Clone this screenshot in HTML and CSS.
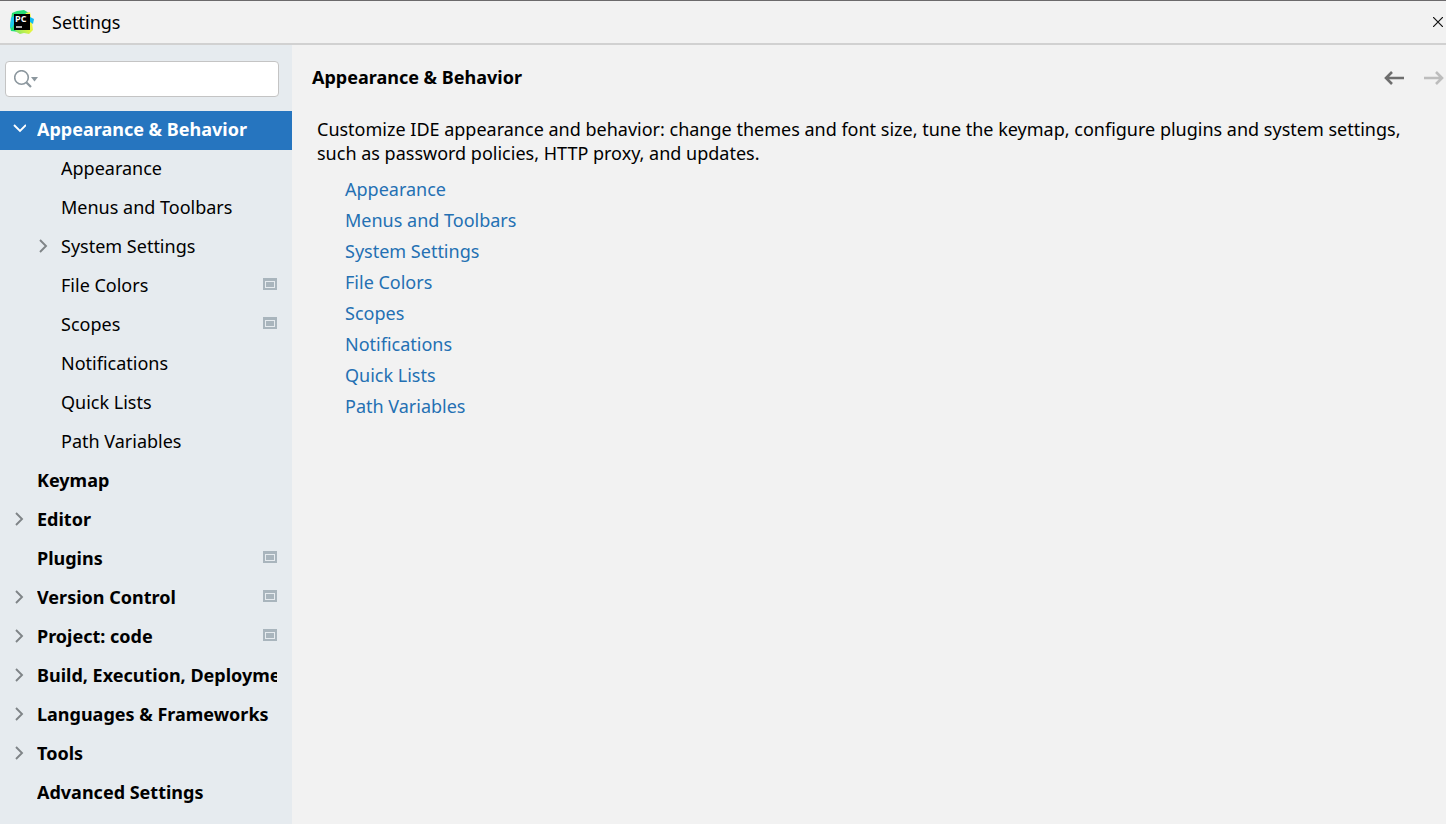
FILE: index.html
```html
<!DOCTYPE html>
<html lang="en">
<head>
<meta charset="utf-8">
<meta name="viewport" content="width=device-width, initial-scale=1">
<title>Settings</title>
<link rel="stylesheet" href="styles.css">
</head>
<body>
<svg class="symbols" aria-hidden="true">
  <symbol id="chevron-right" viewBox="0 0 14 14"><path d="M4 1 10 7 4 13" fill="none" stroke="currentColor" stroke-width="1.9"/></symbol>
  <symbol id="chevron-down" viewBox="0 0 14 14"><path d="M2 3 8 9 14 3" fill="none" stroke="currentColor" stroke-width="1.9"/></symbol>
  <symbol id="project" viewBox="0 0 14 12"><path d="M0 0h14v12H0zM2 3v7h10V3z" fill="#a9b5bd" fill-rule="evenodd"/><path d="M3 4h8v5H3z" fill="#a9b5bd"/></symbol>
</svg>
<header class="titlebar">
  <svg class="logo" viewBox="0 0 24 24" aria-hidden="true">
    <defs>
      <linearGradient id="logo-a" x1="0" y1="0" x2="1" y2="1"><stop offset="0" stop-color="#2be06c"/><stop offset=".6" stop-color="#22dc7c"/><stop offset="1" stop-color="#21d789"/></linearGradient>
      <linearGradient id="logo-b" x1="0" y1="1" x2="1" y2="0"><stop offset="0" stop-color="#7be66a"/><stop offset=".5" stop-color="#e2f440"/><stop offset="1" stop-color="#fcf84a"/></linearGradient>
    </defs>
    <path d="M2 3 7 1l7-1 5 3-1 17-9 2-8-1-1-4z" fill="url(#logo-a)"/>
    <path d="m1 8 4-3v7l-3 6-2-1z" fill="#20c8ec"/>
    <path d="m16 3 4-1 1 5 1 6 1 7-4 4-5-1-4 1-5-3 2-3z" fill="url(#logo-b)"/>
    <path d="m20 7 4 2-1 5-3-2z" fill="#12b9f0"/>
    <path d="M4 4h16v16H4z" fill="#000"/>
    <path d="M6 17h6" stroke="#fff" stroke-width="1.4"/>
    <text class="logo-text" x="5" y="12">PC</text>
  </svg>
  <span class="window-title">Settings</span>
  <button class="close" type="button" aria-label="Close"><svg viewBox="0 0 10 10"><path d="m0 0 10 10M10 0 0 10" stroke="#111" stroke-width="1.2"/></svg></button>
</header>
<div class="window-body">
  <aside class="sidebar">
    <label class="search">
      <svg class="search-icon" viewBox="0 0 24 18" aria-hidden="true"><circle cx="7.5" cy="7.5" r="6.800" fill="none" stroke="#8c979e" stroke-width="1.6"/><path d="m12.500 12.500 4.500 4.500" stroke="#8c979e" stroke-width="2.2"/><path d="M17 7h7l-3.500 4.500z" fill="#8c979e"/></svg>
      <input class="search-input" type="text" aria-label="Search settings">
    </label>
    <nav class="tree" aria-label="Settings categories">
      <button type="button" class="row selected"><svg class="chevron"><use href="#chevron-down"/></svg><span class="label">Appearance &amp; Behavior</span></button>
      <button type="button" class="row child"><span class="chevron"></span><span class="label">Appearance</span></button>
      <button type="button" class="row child"><span class="chevron"></span><span class="label">Menus and Toolbars</span></button>
      <button type="button" class="row child"><svg class="chevron"><use href="#chevron-right"/></svg><span class="label">System Settings</span></button>
      <button type="button" class="row child"><span class="chevron"></span><span class="label">File Colors</span><svg class="project"><use href="#project"/></svg></button>
      <button type="button" class="row child"><span class="chevron"></span><span class="label">Scopes</span><svg class="project"><use href="#project"/></svg></button>
      <button type="button" class="row child"><span class="chevron"></span><span class="label">Notifications</span></button>
      <button type="button" class="row child"><span class="chevron"></span><span class="label">Quick Lists</span></button>
      <button type="button" class="row child"><span class="chevron"></span><span class="label">Path Variables</span></button>
      <button type="button" class="row"><span class="chevron"></span><span class="label">Keymap</span></button>
      <button type="button" class="row"><svg class="chevron"><use href="#chevron-right"/></svg><span class="label">Editor</span></button>
      <button type="button" class="row"><span class="chevron"></span><span class="label">Plugins</span><svg class="project"><use href="#project"/></svg></button>
      <button type="button" class="row"><svg class="chevron"><use href="#chevron-right"/></svg><span class="label">Version Control</span><svg class="project"><use href="#project"/></svg></button>
      <button type="button" class="row"><svg class="chevron"><use href="#chevron-right"/></svg><span class="label">Project: code</span><svg class="project"><use href="#project"/></svg></button>
      <button type="button" class="row"><svg class="chevron"><use href="#chevron-right"/></svg><span class="label">Build, Execution, Deployment</span></button>
      <button type="button" class="row"><svg class="chevron"><use href="#chevron-right"/></svg><span class="label">Languages &amp; Frameworks</span></button>
      <button type="button" class="row"><svg class="chevron"><use href="#chevron-right"/></svg><span class="label">Tools</span></button>
      <button type="button" class="row"><span class="chevron"></span><span class="label">Advanced Settings</span></button>
    </nav>
  </aside>
  <main class="content">
    <div class="content-head">
      <h1 class="heading">Appearance &amp; Behavior</h1>
      <div class="history">
        <button class="arrow" type="button" aria-label="Back"><svg viewBox="0 0 20 14"><path d="M20 7H2M8 1 2 7l6 6" fill="none" stroke="currentColor" stroke-width="2.6"/></svg></button>
        <button class="arrow" type="button" aria-label="Forward" disabled><svg viewBox="0 0 20 14"><path d="M0 7h18M12 1l6 6-6 6" fill="none" stroke="currentColor" stroke-width="2.6"/></svg></button>
      </div>
    </div>
    <p class="description">Customize IDE appearance and behavior: change themes and font size, tune the keymap, configure plugins and system settings, such as password policies, HTTP proxy, and updates.</p>
    <ul class="links">
      <li><a href="#">Appearance</a></li>
      <li><a href="#">Menus and Toolbars</a></li>
      <li><a href="#">System Settings</a></li>
      <li><a href="#">File Colors</a></li>
      <li><a href="#">Scopes</a></li>
      <li><a href="#">Notifications</a></li>
      <li><a href="#">Quick Lists</a></li>
      <li><a href="#">Path Variables</a></li>
    </ul>
  </main>
</div>
</body>
</html>
```
FILE: styles.css
```css
* { box-sizing: border-box; }
body {
  margin: 0;
  min-height: 100vh;
  display: flex;
  flex-direction: column;
  background: #f2f2f2;
  color: #000;
  font: 18px/24px "Noto Sans", "Open Sans", sans-serif;
}
button { padding: 0; border: 0; background: none; color: inherit; font: inherit; }
svg { display: block; flex: none; }
.symbols { display: none; }

.titlebar {
  display: flex;
  align-items: center;
  height: 45px;
  padding: 0 3px 0 10px;
  border-top: 1px solid #6c6a6c;
  border-bottom: 2px solid #d1d1d1;
}
.logo { width: 24px; height: 24px; }
.logo-text { font: 700 9px "Open Sans", sans-serif; fill: #fff; }
.window-title { flex: 1; margin-left: 18px; }
.close svg { width: 10px; height: 10px; }

.window-body { flex: 1; display: flex; }
.sidebar { flex: none; width: 292px; padding-top: 16px; background: #e6ebef; }
.search {
  display: flex;
  align-items: center;
  height: 36px;
  margin: 0 13px 14px 5px;
  padding: 0 8px;
  border: 1px solid #c4c4c4;
  border-radius: 4px;
  background: #fff;
}
.search-icon { width: 24px; height: 18px; }
.search-input { flex: 1; min-width: 0; border: 0; outline: 0; background: none; font: inherit; }

.row {
  display: flex;
  align-items: center;
  width: 100%;
  height: 39px;
  padding: 0 15px 4px 12px;
  font-weight: 700;
  text-align: left;
}
.child { padding-left: 36px; font-weight: 400; }
.selected { background: #2675bf; color: #fff; }
.chevron { flex: none; width: 14px; height: 14px; margin-right: 11px; color: #7f8487; }
.selected .chevron { color: #fff; }
.label { flex: 1; min-width: 0; overflow: hidden; white-space: nowrap; }
.project { width: 14px; height: 12px; margin-bottom: 2px; }

.content { flex: 1; min-width: 0; padding-left: 20px; }
.content-head { display: flex; align-items: center; justify-content: space-between; height: 66px; padding-right: 2px; }
.heading { margin: 0; padding-bottom: 2px; font-size: 18px; font-weight: 700; }
.history { display: flex; gap: 20px; }
.arrow { color: #6e6e6e; }
.arrow:disabled { color: #bdbdbd; }
.arrow svg { width: 20px; height: 14px; }
.description { margin: 6px 24px 12px 5px; }
.links { margin: 0; padding: 0 0 0 33px; list-style: none; }
.links li { height: 31px; }
.links a { color: #2470b3; text-decoration: none; }
```
